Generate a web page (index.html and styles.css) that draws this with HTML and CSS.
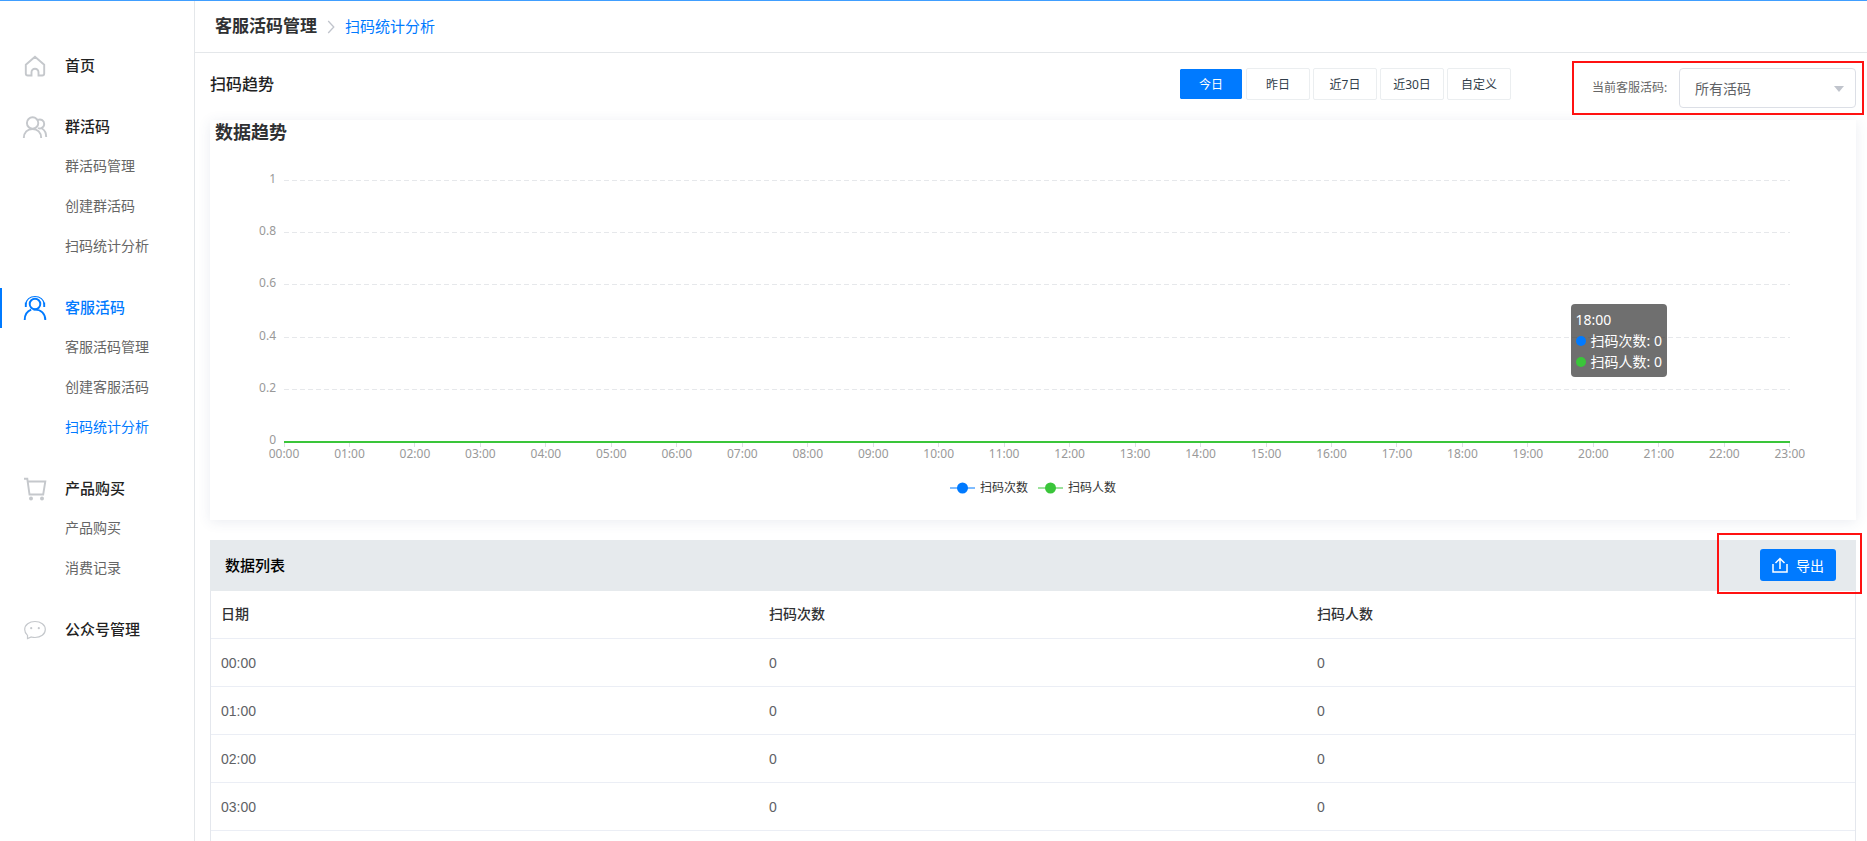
FILE: index.html
```html
<!DOCTYPE html>
<html lang="zh-CN">
<head>
<meta charset="utf-8">
<title>扫码统计分析</title>
<link rel="stylesheet" href="styles.css">
</head>
<body>
<div class="app">
  <nav class="sidebar">
    <section class="group">
      <a class="item" href="#">
        <svg class="icon" viewBox="0 0 24 24"><path d="M12 2.8 2.800 10.800v8.700q0 2 2 2H8.500v-3.300a3.500 3.500 0 0 1 7 0v3.300h3.700q2 0 2-2v-8.700z"/></svg>
        首页
      </a>
    </section>
    <section class="group">
      <a class="item" href="#">
        <svg class="icon" viewBox="0 -1 24 24"><circle cx="9.600" cy="7" r="5.700"/><path d="M.8 22c0-5.500 3.700-9 8.700-9s8.700 3.500 8.700 9M14.500 4c3.600-1.400 6.700.5 6.700 4 0 2-1.200 3.400-2.800 4.200-1 .5-2.400.4-3.400-.2M19 12.500c2.600 1.600 4.200 4.500 4.200 8.500"/></svg>
        群活码
      </a>
      <a class="sub" href="#">群活码管理</a>
      <a class="sub" href="#">创建群活码</a>
      <a class="sub" href="#">扫码统计分析</a>
    </section>
    <section class="group">
      <a class="item active" href="#">
        <svg class="icon" viewBox="0 0 24 24"><circle cx="12" cy="8" r="5.300"/><path d="M1.700 24c0-5.500 2-8.700 6.500-10.400M10.500 13.700c8-.6 11.800 4.300 11.800 10.300"/><path class="fine" d="M2.700 8.500C3 3.500 7 .5 12 .5s9 3 9.300 8"/><path d="M2.800 6.500v4.500M21.200 6.500v4.500"/></svg>
        客服活码
      </a>
      <a class="sub" href="#">客服活码管理</a>
      <a class="sub" href="#">创建客服活码</a>
      <a class="sub current" href="#">扫码统计分析</a>
    </section>
    <section class="group">
      <a class="item" href="#">
        <svg class="icon" viewBox="0 0 24 24"><path d="M1 1.800h3.300L6.500 17.500h13.700L22.300 4.500H4.600"/><g class="solid"><circle cx="8" cy="21.500" r="2"/><circle cx="19" cy="21.500" r="2"/></g></svg>
        产品购买
      </a>
      <a class="sub" href="#">产品购买</a>
      <a class="sub" href="#">消费记录</a>
    </section>
    <section class="group">
      <a class="item" href="#">
        <svg class="icon" viewBox="0 0 24 24"><path class="fine" d="M4.500 17.400C2.600 15.800 1.700 13.700 1.700 11.500c0-4.700 4.600-8 10.300-8s10.300 3.300 10.300 8-4.600 8-10.300 8c-1.300 0-2.600-.2-3.700-.5l-3.800 1.600z"/><g class="solid"><circle cx="8.200" cy="10.200" r="1.100"/><circle cx="15.800" cy="10.200" r="1.100"/></g></svg>
        公众号管理
      </a>
    </section>
  </nav>

  <main class="main">
    <header class="crumbs">
      <h1 class="crumb-title">客服活码管理</h1>
      <svg class="chevron" viewBox="0 0 8 14"><path d="M1.200 1 6.800 7l-5.600 6"/></svg>
      <a class="crumb-link" href="#">扫码统计分析</a>
    </header>

    <div class="content">
      <div class="toolbar">
        <h2 class="toolbar-title">扫码趋势</h2>
        <div class="ranges">
          <button class="range selected" type="button">今日</button>
          <button class="range" type="button">昨日</button>
          <button class="range" type="button">近7日</button>
          <button class="range" type="button">近30日</button>
          <button class="range" type="button">自定义</button>
        </div>
        <div class="filter">
          <label class="filter-label" for="code">当前客服活码:</label>
          <div class="select-box">
            <select class="select" id="code"><option>所有活码</option></select>
            <svg class="caret" viewBox="0 0 10 6"><path d="M0 0h10L5 6z"/></svg>
          </div>
        </div>
      </div>

      <section class="card">
        <h3 class="card-title">数据趋势</h3>
        <div class="plot">
          <div class="grid">
            <div class="line"><span class="tick">1</span></div>
            <div class="line"><span class="tick">0.8</span></div>
            <div class="line"><span class="tick">0.6</span></div>
            <div class="line"><span class="tick">0.4</span></div>
            <div class="line"><span class="tick">0.2</span></div>
            <div class="series"><span class="tick">0</span></div>
          </div>
          <ol class="hours">
            <li>00:00</li><li>01:00</li><li>02:00</li><li>03:00</li><li>04:00</li><li>05:00</li>
            <li>06:00</li><li>07:00</li><li>08:00</li><li>09:00</li><li>10:00</li><li>11:00</li>
            <li>12:00</li><li>13:00</li><li>14:00</li><li>15:00</li><li>16:00</li><li>17:00</li>
            <li>18:00</li><li>19:00</li><li>20:00</li><li>21:00</li><li>22:00</li><li>23:00</li>
          </ol>
          <div class="tooltip">
            <div>18:00</div>
            <div class="tip-row"><i class="dot blue"></i>扫码次数: 0</div>
            <div class="tip-row"><i class="dot green"></i>扫码人数: 0</div>
          </div>
        </div>
        <div class="legend">
          <span class="key"><svg class="mark blue" viewBox="0 0 25 12"><path d="M0 6h25"/><circle cx="12.500" cy="6" r="5.500"/></svg>扫码次数</span>
          <span class="key"><svg class="mark green" viewBox="0 0 25 12"><path d="M0 6h25"/><circle cx="12.500" cy="6" r="5.500"/></svg>扫码人数</span>
        </div>
      </section>

      <section class="list">
        <header class="list-head">
          <h3 class="list-title">数据列表</h3>
          <div class="export-area">
            <button class="export" type="button">
              <svg class="export-icon" viewBox="0 0 16 16"><path d="M1 7v8h14V7M8 12V1.500M3.500 6 8 1.500 12.500 6"/></svg>
              导出
            </button>
          </div>
        </header>
        <div class="list-body">
          <table class="table">
            <thead><tr><th>日期</th><th>扫码次数</th><th>扫码人数</th></tr></thead>
            <tbody>
              <tr><td>00:00</td><td>0</td><td>0</td></tr>
              <tr><td>01:00</td><td>0</td><td>0</td></tr>
              <tr><td>02:00</td><td>0</td><td>0</td></tr>
              <tr><td>03:00</td><td>0</td><td>0</td></tr>
            </tbody>
          </table>
        </div>
      </section>
    </div>
  </main>
</div>
</body>
</html>
```
FILE: styles.css
```css
* { box-sizing: border-box; }

body {
  margin: 0;
  background: #fff;
  color: #303133;
  font: 14px/20px "Noto Sans", "Noto Sans CJK SC", sans-serif;
}

h1, h2, h3, ol { margin: 0; padding: 0; }
a { color: inherit; text-decoration: none; }
button, select { font-family: inherit; }

.app {
  display: flex;
  min-height: 100vh;
  border-top: 1px solid #409eff;
}

/* Sidebar */
.sidebar {
  flex: none;
  width: 195px;
  padding-top: 45px;
  border-right: 1px solid #e4e7ea;
}
.group { margin-bottom: 21px; }
.group:last-child { margin-bottom: 0; }
.item, .sub {
  display: flex;
  align-items: center;
  height: 40px;
  padding-bottom: 2px;
}
.item {
  gap: 18px;
  padding-left: 21px;
  border-left: 2px solid transparent;
  color: #222;
  font-size: 15px;
  font-weight: 500;
}
.item.active { border-left-color: #007aff; color: #007aff; }
.item.active .icon { stroke: #007aff; }
.sub { padding-left: 65px; color: #666; }
.sub.current { color: #007aff; }
.icon {
  width: 24px;
  height: 24px;
  margin-top: 2px;
  fill: none;
  stroke: #c5c8cc;
  stroke-width: 1.9;
  overflow: visible;
}
.icon .fine { stroke-width: 1.2; }
.icon .solid { fill: #c5c8cc; stroke: none; }

/* Main column */
.main {
  display: flex;
  flex: 1;
  flex-direction: column;
  min-width: 0;
}
.crumbs {
  display: flex;
  align-items: center;
  height: 52px;
  padding: 0 0 2px 20px;
  border-bottom: 1px solid #e4e7ea;
}
.crumb-title { font-size: 17px; font-weight: 700; }
.chevron {
  width: 8px;
  height: 14px;
  margin: 2px 10px 0;
  fill: none;
  stroke: #c0c4cc;
  stroke-width: 1.3;
}
.crumb-link { color: #007aff; font-size: 15px; }
.content {
  display: flex;
  flex: 1;
  flex-direction: column;
  padding: 0 11px 0 15px;
}

/* Toolbar */
.toolbar {
  display: flex;
  align-items: flex-start;
  height: 67px;
  padding-top: 15px;
}
.toolbar-title {
  flex: 1;
  color: #222;
  font-size: 16px;
  font-weight: 500;
  line-height: 32px;
}
.ranges { display: flex; gap: 3px; }
.range {
  width: 64px;
  height: 32px;
  padding: 0;
  border: 1px solid #ebeef0;
  border-radius: 2px;
  background: #fff;
  color: #303d4a;
  font-size: 12px;
}
.range.selected {
  border-color: #fff;
  background: #007aff;
  background-clip: padding-box;
  color: #fff;
}
.filter {
  position: relative;
  display: flex;
  align-items: center;
  gap: 11px;
  margin-left: 81px;
}
.filter::after {
  content: "";
  position: absolute;
  inset: -7px -8px -7px -20px;
  border: 2px solid #f11;
  pointer-events: none;
}
.filter-label { min-width: 76px; color: #666; font-size: 12px; }
.select-box { position: relative; width: 177px; }
.select {
  width: 100%;
  height: 40px;
  padding: 0 15px;
  border: 1px solid #dcdfe6;
  border-radius: 4px;
  background: #fff;
  color: #606266;
  font-size: 14px;
  appearance: none;
}
.caret {
  position: absolute;
  top: 18px;
  right: 12px;
  width: 10px;
  height: 6px;
  fill: #c0c4cc;
  pointer-events: none;
}

/* Chart */
.card {
  height: 400px;
  padding: 2px 66px 0 74px;
  box-shadow: 0 2px 12px rgba(60, 80, 130, 0.1);
}
.card-title {
  margin-left: -69px;
  font-size: 18px;
  font-weight: 700;
  line-height: 20px;
}
.plot { position: relative; margin-top: 38px; }
.grid {
  display: grid;
  grid-template-rows: repeat(5, 1fr) 2px;
  height: 263px;
}
.line {
  background: repeating-linear-gradient(90deg, #e6e8eb 0 5px, transparent 5px 8px) 0 0 / 100% 1px no-repeat;
}
.series { background: #3ac53a; }
.tick {
  display: block;
  width: 40px;
  margin: -11px 0 0 -48px;
  color: #999;
  font-size: 12px;
  line-height: 20px;
  text-align: right;
}
.hours {
  display: flex;
  justify-content: space-between;
  margin: 0 -20px;
  color: #999;
  font-size: 12px;
  line-height: 14px;
  list-style: none;
}
.hours li { width: 40px; text-align: center; }
.hours li::before {
  content: "";
  display: block;
  width: 1px;
  height: 4px;
  margin: 0 auto;
  background: #dcdfe3;
}
.tooltip {
  position: absolute;
  top: 124px;
  right: 123px;
  padding: 5px;
  border-radius: 4px;
  background: rgba(50, 50, 50, 0.7);
  color: #fff;
  line-height: 21px;
  white-space: nowrap;
}
.tip-row { display: flex; align-items: center; gap: 5px; }
.dot { width: 10px; height: 10px; border-radius: 50%; }
.dot.blue { background: #007aff; }
.dot.green { background: #3ac53a; }
.legend {
  display: flex;
  justify-content: center;
  gap: 10px;
  margin: 17px 0 0 -8px;
  color: #333;
  font-size: 12px;
}
.key { display: flex; align-items: center; gap: 5px; }
.mark { width: 25px; height: 12px; stroke-width: 2; }
.mark path { stroke-opacity: 0.5; }
.mark circle { stroke: none; }
.mark.blue { fill: #007aff; stroke: #007aff; }
.mark.green { fill: #3ac53a; stroke: #3ac53a; }

/* Data list */
.list {
  display: flex;
  flex: 1;
  flex-direction: column;
  margin-top: 20px;
}
.list-head {
  display: flex;
  align-items: center;
  justify-content: space-between;
  height: 51px;
  padding: 0 20px 1px 15px;
  background: #e6eaed;
}
.list-title { color: #000; font-size: 15px; font-weight: 500; }
.export-area { position: relative; }
.export-area::after {
  content: "";
  position: absolute;
  inset: -16px -26px -13px -43px;
  border: 2px solid #f11;
  pointer-events: none;
}
.export {
  display: flex;
  align-items: center;
  justify-content: center;
  gap: 8px;
  width: 76px;
  height: 32px;
  padding: 0 0 1px;
  border: 0;
  border-radius: 3px;
  background: #007aff;
  color: #fff;
  font-size: 14px;
}
.export-icon {
  width: 16px;
  height: 16px;
  fill: none;
  stroke: #fff;
  stroke-width: 1.5;
}
.list-body {
  flex: 1;
  border: 1px solid #e4e7ed;
  border-width: 0 1px;
}
.table {
  width: 100%;
  border-collapse: separate;
  border-spacing: 0;
  table-layout: fixed;
}
.table th, .table td {
  height: 48px;
  padding: 0 10px;
  border-bottom: 1px solid #ebeef5;
  text-align: left;
}
.table th { padding-bottom: 2px; font-weight: 500; }
.table td { color: #606266; font-family: "Liberation Sans", sans-serif; }
```
